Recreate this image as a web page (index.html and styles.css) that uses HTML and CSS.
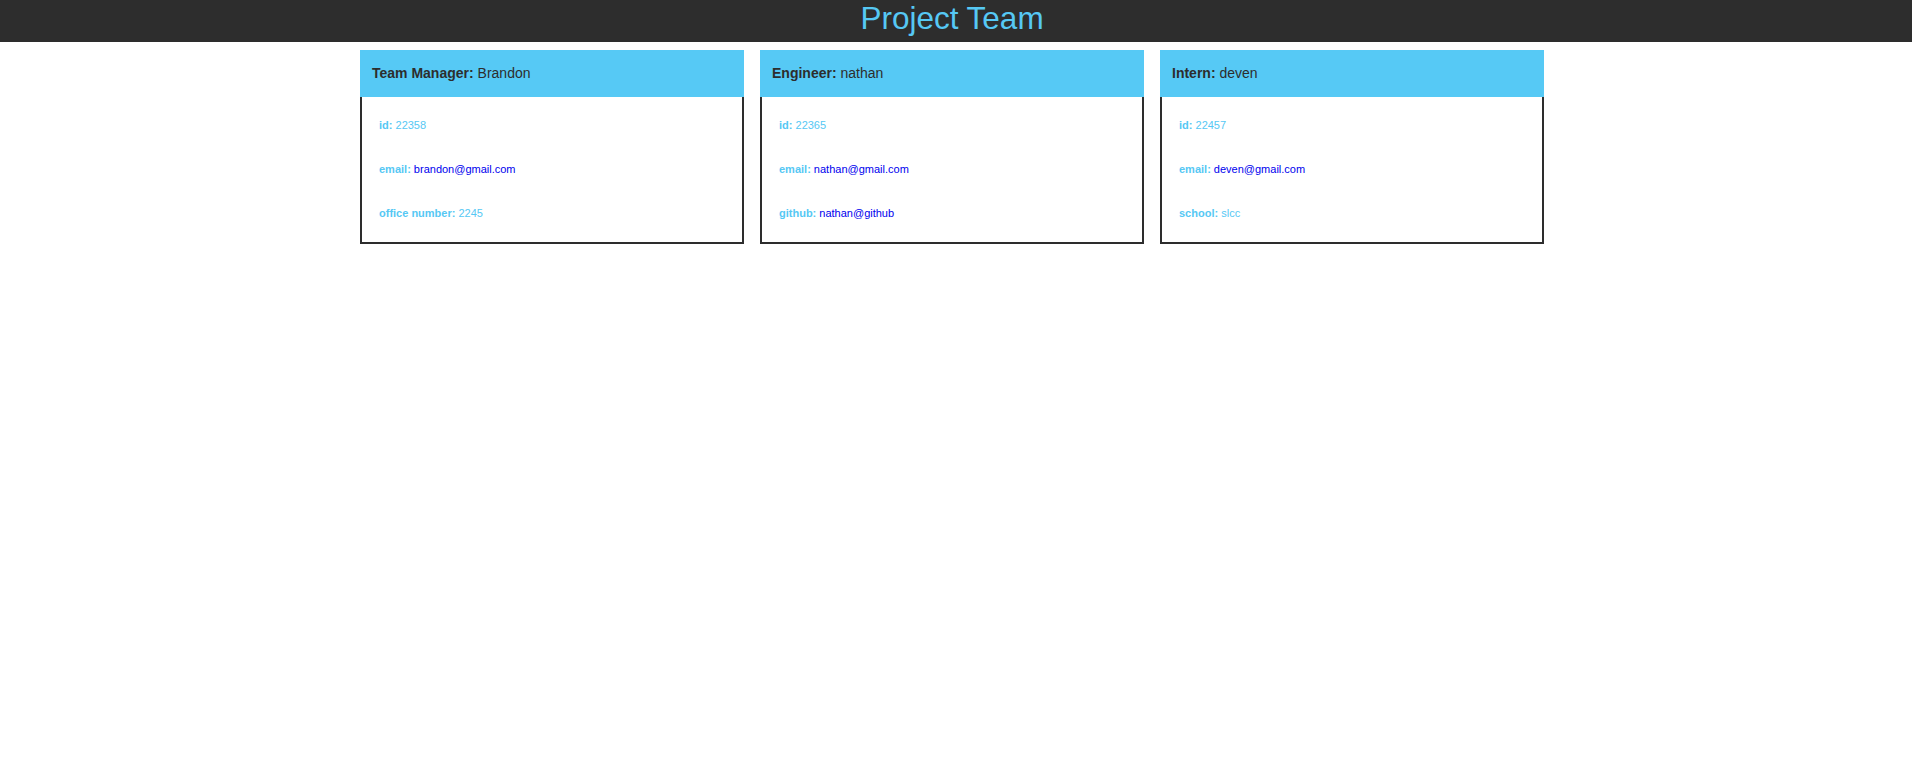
FILE: index.html
```html
<!DOCTYPE html>
<html lang="en">
<head>
<meta charset="utf-8">
<title>Project Team</title>
<link rel="stylesheet" href="styles.css">
</head>
<body>
<header class="topbar">
  <h1 class="title">Project Team</h1>
</header>
<main class="cards">
  <section class="card">
    <div class="card-head"><strong>Team Manager:</strong> Brandon</div>
    <ul class="card-body">
      <li><b>id:</b> 22358</li>
      <li><b>email:</b> <a class="link" href="#">brandon@gmail.com</a></li>
      <li><b>office number:</b> 2245</li>
    </ul>
  </section>
  <section class="card">
    <div class="card-head"><strong>Engineer:</strong> nathan</div>
    <ul class="card-body">
      <li><b>id:</b> 22365</li>
      <li><b>email:</b> <a class="link" href="#">nathan@gmail.com</a></li>
      <li><b>github:</b> <a class="link" href="#">nathan@github</a></li>
    </ul>
  </section>
  <section class="card">
    <div class="card-head"><strong>Intern:</strong> deven</div>
    <ul class="card-body">
      <li><b>id:</b> 22457</li>
      <li><b>email:</b> <a class="link" href="#">deven@gmail.com</a></li>
      <li><b>school:</b> slcc</li>
    </ul>
  </section>
</main>
</body>
</html>
```

FILE: styles.css
```css
html, body {
  margin: 0;
  padding: 0;
  background: #ffffff;
  font-family: "Liberation Sans", Arial, sans-serif;
}

.topbar {
  background: #2d2d2d;
  height: 42px;
  display: flex;
  justify-content: center;
  padding-right: 8px;
}

.title {
  margin: 0;
  font-size: 31.5px;
  font-weight: normal;
  line-height: 37px;
  color: #56c8f4;
}

.cards {
  display: flex;
  justify-content: center;
  gap: 16px;
  padding: 8px 8px 0 0;
}

.card {
  width: 384px;
  box-sizing: border-box;
}

.card-head {
  background: #56c9f5;
  height: 47px;
  line-height: 47px;
  padding-left: 12px;
  font-size: 14px;
  color: #2d2d2d;
}

.card-head strong {
  font-weight: bold;
}

.card-body {
  list-style: none;
  margin: 0;
  padding: 6px 15px 7px 17px;
  border: 2px solid #2d2d2d;
  border-top: none;
  font-size: 11px;
  color: #56c8f4;
}

.card-body li {
  height: 44px;
  line-height: 44px;
}

.card-body b {
  font-weight: bold;
}

.link {
  color: #0000ee;
  text-decoration: none;
}
```
